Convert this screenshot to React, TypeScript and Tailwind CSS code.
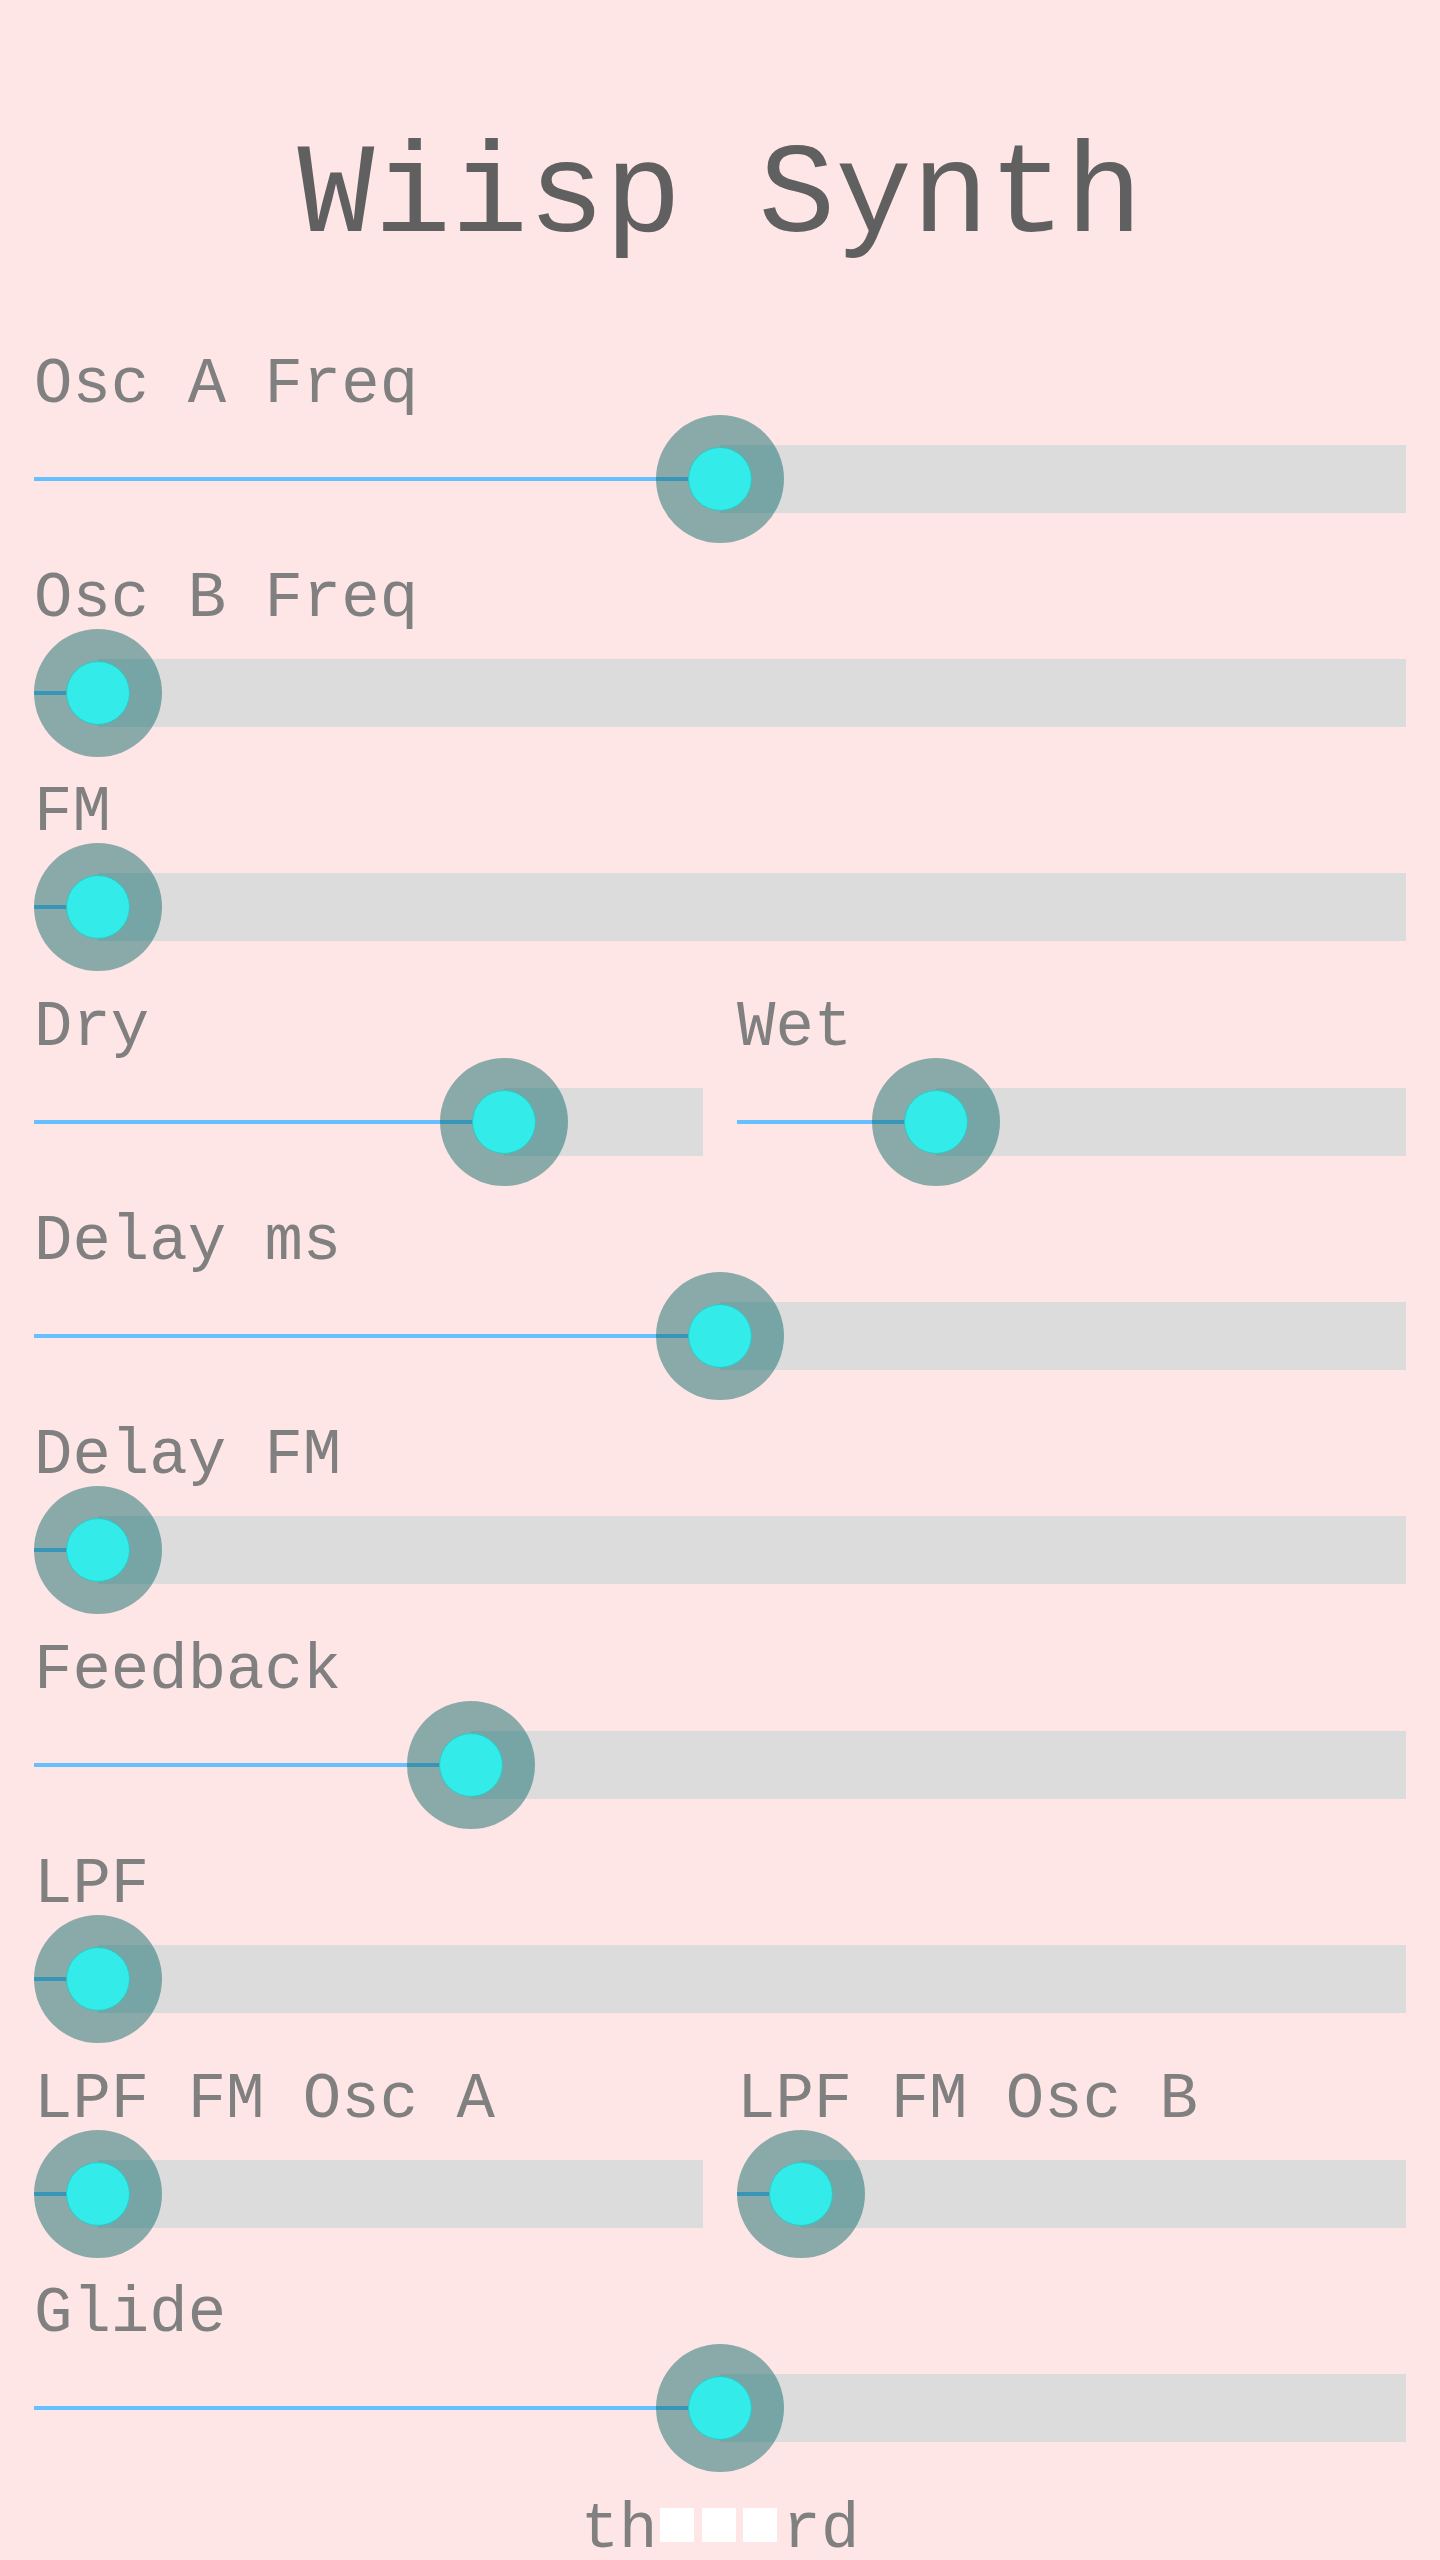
import React from "react";

type SliderProps = {
  label: string;
  value: number; // 0..1
};

// custom range look: thin blue fill on the left, thick gray rest on the right, big halo thumb
const Slider: React.FC<SliderProps> = ({ label, value }) => {
  const center = `calc(64px + ${value} * (100% - 128px))`;

  return (
    <div className="flex flex-col">
      <div className="h-[72px] text-[64px] leading-[72px] text-[#808080] whitespace-pre">{label}</div>
      <div className="relative h-[116px]">
        {/* rest of track */}
        <div
          className="absolute top-1/2 right-0 h-[68px] -translate-y-1/2 bg-[#dcdcdc]"
          style={{ left: center }}
        />
        {/* filled part */}
        <div
          className="absolute top-1/2 left-0 h-[4px] -translate-y-1/2 bg-[#66bfff]"
          style={{ width: center }}
        />
        {/* thumb */}
        <div
          className="absolute top-1/2 flex h-[128px] w-[128px] -translate-x-1/2 -translate-y-1/2 items-center justify-center rounded-full bg-[rgba(0,100,100,0.46)]"
          style={{ left: center }}
        >
          <div className="h-[64px] w-[64px] rounded-full border border-[#2cc9c6] bg-[#33ebe8]" />
        </div>
      </div>
    </div>
  );
};

const App: React.FC = () => {
  return (
    <div className="min-h-screen bg-[#ffe6e6] px-[34px] font-['Liberation_Mono',monospace]">
      <h1 className="pt-[133px] text-center text-[128px] leading-[128px] text-[#606060]">Wiisp Synth</h1>

      <div className="mt-[87.5px] flex flex-col gap-[26.4px]">
        <Slider label="Osc A Freq" value={0.5} />
        <Slider label="Osc B Freq" value={0} />
        <Slider label="FM" value={0} />
        <div className="grid grid-cols-2 gap-x-[34px]">
          <Slider label="Dry" value={0.75} />
          <Slider label="Wet" value={0.25} />
        </div>
        <Slider label="Delay ms" value={0.5} />
        <Slider label="Delay FM" value={0} />
        <Slider label="Feedback" value={0.3} />
        <Slider label="LPF" value={0} />
        <div className="grid grid-cols-2 gap-x-[34px]">
          <Slider label="LPF FM Osc A" value={0} />
          <Slider label="LPF FM Osc B" value={0} />
        </div>
        <Slider label="Glide" value={0.5} />
      </div>

      <p className="mt-[28px] pb-[40px] text-center text-[64px] leading-[72px] text-[#808080]">
        th
        <span className="mb-[5px] ml-[2.5px] mr-[5.2px] inline-block h-[34px] w-[34px] bg-white" />
        <span className="mb-[5px] ml-[2.5px] mr-[5.2px] inline-block h-[34px] w-[34px] bg-white" />
        <span className="mb-[5px] ml-[2.5px] mr-[5.2px] inline-block h-[34px] w-[34px] bg-white" />
        rd
      </p>
    </div>
  );
};

export default App;
